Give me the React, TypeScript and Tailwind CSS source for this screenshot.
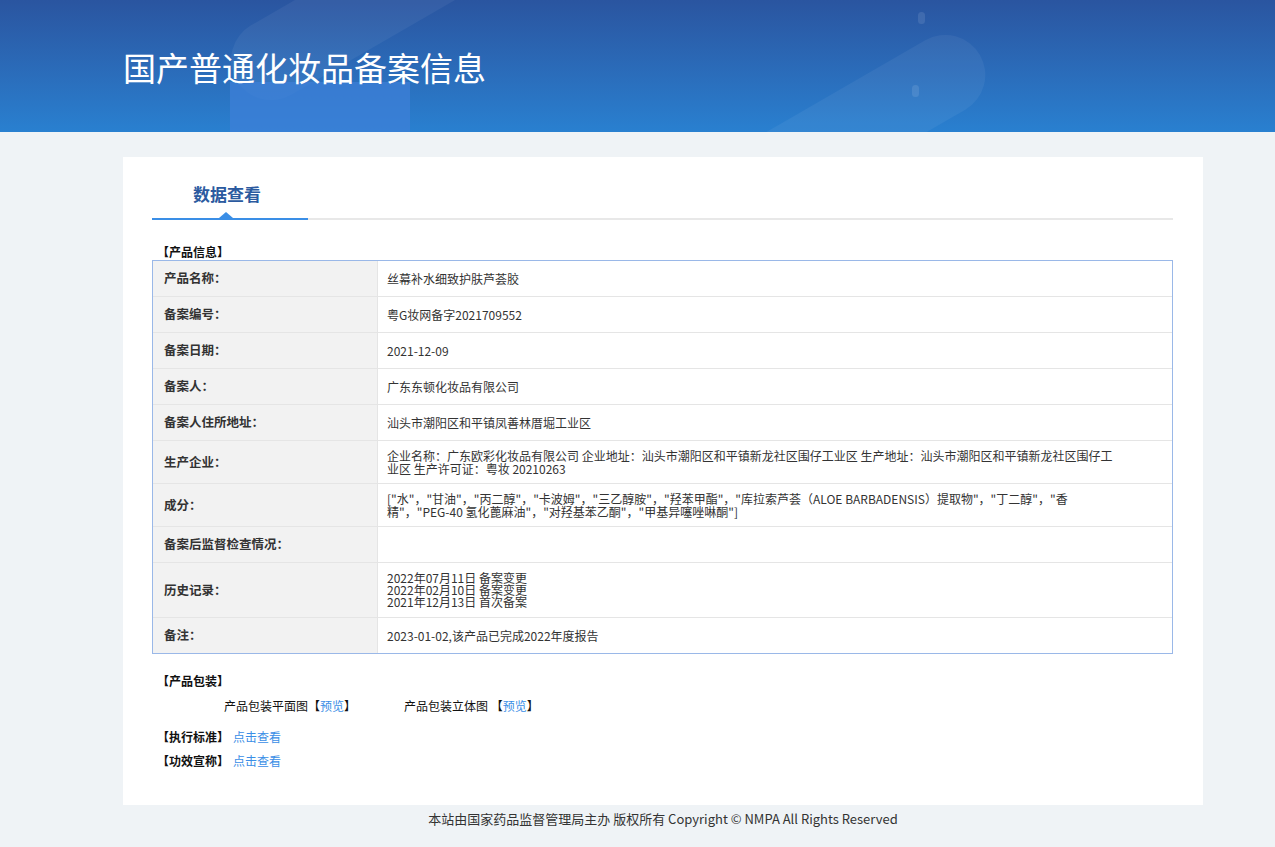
import { type ReactNode } from "react";

const rows: { label: string; value: ReactNode; h: string }[] = [
	{ label: "产品名称：", value: "丝幕补水细致护肤芦荟胶", h: "h-[35px]" },
	{ label: "备案编号：", value: "粤G妆网备字2021709552", h: "h-[36px]" },
	{ label: "备案日期：", value: "2021-12-09", h: "h-[36px]" },
	{ label: "备案人：", value: "广东东顿化妆品有限公司", h: "h-[36px]" },
	{ label: "备案人住所地址：", value: "汕头市潮阳区和平镇凤善林厝堀工业区", h: "h-[36px]" },
	{
		label: "生产企业：",
		value: (
			<span className="block leading-[13px]">
				企业名称：广东欧彩化妆品有限公司 企业地址：汕头市潮阳区和平镇新龙社区围仔工业区 生产地址：汕头市潮阳区和平镇新龙社区围仔工业区 生产许可证：粤妆 20210263
			</span>
		),
		h: "h-[43px]",
	},
	{
		label: "成分：",
		value: (
			<span className="block leading-[13px]">
				["水"，"甘油"，"丙二醇"，"卡波姆"，"三乙醇胺"，"羟苯甲酯"，"库拉索芦荟（ALOE BARBADENSIS）提取物"，"丁二醇"，"香精"，"PEG-40 氢化蓖麻油"，"对羟基苯乙酮"，"甲基异噻唑啉酮"]
			</span>
		),
		h: "h-[43px]",
	},
	{ label: "备案后监督检查情况：", value: "", h: "h-[36px]" },
	{
		label: "历史记录：",
		value: (
			<span className="block leading-[12px]">
				2022年07月11日 备案变更
				<br />
				2022年02月10日 备案变更
				<br />
				2021年12月13日 首次备案
			</span>
		),
		h: "h-[55px]",
	},
	{ label: "备注：", value: "2023-01-02,该产品已完成2022年度报告", h: "h-[36px]" },
];

function Header() {
	return (
		<div className="relative h-[132px] overflow-hidden bg-gradient-to-b from-[#2a55a0] to-[#2980d0]">
			{/* decorative background shapes */}
			<div className="absolute left-[215px] top-[-40px] h-[80px] w-[320px] rotate-[-30deg] rounded-full bg-white/5" />
			<div className="absolute left-[230px] top-[82px] h-[60px] w-[180px] bg-[#3e80d8]/70" />
			<div className="absolute left-[700px] top-[90px] h-[80px] w-[300px] rotate-[-30deg] rounded-full bg-white/5" />
			<div className="absolute left-[918px] top-[12px] h-[12px] w-[7px] rounded-full bg-white/10" />
			<div className="absolute left-[912px] top-[85px] h-[12px] w-[7px] rounded-full bg-white/10" />
			<h1 className="relative pl-[123px] pt-[47px] text-[33px] font-normal leading-[40px] text-white">
				国产普通化妆品备案信息
			</h1>
		</div>
	);
}

export default function App() {
	return (
		<div
			className="min-h-screen bg-[#eff3f6] text-[#333]"
			style={{ fontFamily: '"Noto Sans CJK SC", "Noto Sans", sans-serif' }}
		>
			<Header />
			<div className="w-[1203px] pl-[123px] pt-[25px]">
				<div className="bg-white pb-[36px] pl-[29px] pr-[30px] pt-[24px]">
					<div className="flex items-end">
						<div className="relative w-[156px] border-b-2 border-[#3a8ee6] pb-[11px]">
							<span className="block pl-[41px] text-[17px] font-bold leading-[26px] text-[#2b5a9f]">
								数据查看
							</span>
							<span className="absolute bottom-0 left-[67px] h-0 w-0 border-x-[7px] border-b-[6px] border-x-transparent border-b-[#3a8ee6]" />
						</div>
						<div className="flex-1 border-b-2 border-[#e8e8e8]" />
					</div>

					<div className="mt-[24px] pl-[5px] text-[12px] font-bold leading-[16px] text-[#111]">
						【产品信息】
					</div>
					<div className="border border-[#9ab8e8]">
						{rows.map((r, i) => (
							<div
								key={r.label}
								className={`flex ${r.h} ${i > 0 ? "border-t border-[#e5e5e5]" : ""}`}
							>
								<div className="flex w-[225px] shrink-0 items-center border-r border-[#e5e5e5] bg-[#f2f2f2] pl-[11px] text-[12.5px] font-bold text-[#333]">
									{r.label}
								</div>
								<div className="flex flex-1 items-center pl-[9px] pr-[56px] text-[12px] text-[#333]">
									{r.value}
								</div>
							</div>
						))}
					</div>

					<div className="mt-[19px] pl-[5px] text-[12px] font-bold leading-[16px] text-[#111]">
						【产品包装】
					</div>
					<div className="mt-[9px] flex gap-[48px] pl-[72px] text-[12px] leading-[16px] text-[#111]">
						<span>
							产品包装平面图【<span className="text-[#3a8ee6]">预览</span>】
						</span>
						<span>
							产品包装立体图 【<span className="text-[#3a8ee6]">预览</span>】
						</span>
					</div>
					<div className="mt-[15px] flex gap-[4px] pl-[5px] text-[12px] leading-[16px]">
						<span className="font-bold text-[#111]">【执行标准】</span>
						<span className="text-[#3a8ee6]">点击查看</span>
					</div>
					<div className="mt-[8px] flex gap-[4px] pl-[5px] text-[12px] leading-[16px]">
						<span className="font-bold text-[#111]">【功效宣称】</span>
						<span className="text-[#3a8ee6]">点击查看</span>
					</div>
				</div>
				<div className="py-[5px] text-center text-[13px] leading-[18px] text-[#333]">
					本站由国家药品监督管理局主办 版权所有 Copyright © NMPA All Rights Reserved
				</div>
			</div>
		</div>
	);
}
